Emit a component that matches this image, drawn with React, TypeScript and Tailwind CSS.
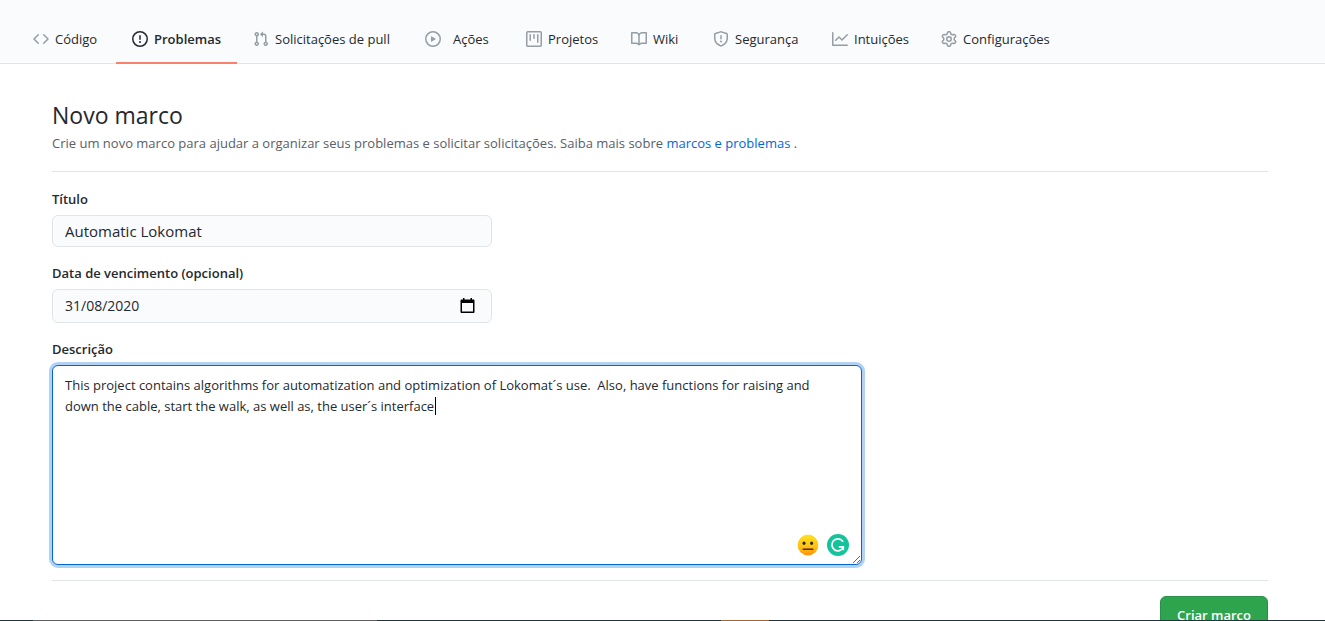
const ICONS = {
  code: 'M4.72 3.22a.75.75 0 011.06 1.06L2.06 8l3.72 3.72a.75.75 0 11-1.06 1.06L.47 8.53a.75.75 0 010-1.06l4.25-4.25zm6.56 0a.75.75 0 10-1.06 1.06L13.94 8l-3.72 3.72a.75.75 0 101.06 1.06l4.25-4.25a.75.75 0 000-1.06l-4.25-4.25z',
  issue: 'M8 1.5a6.5 6.5 0 100 13 6.5 6.5 0 000-13zM0 8a8 8 0 1116 0A8 8 0 010 8zm9 3a1 1 0 11-2 0 1 1 0 012 0zm-.25-6.25a.75.75 0 00-1.5 0v3.5a.75.75 0 001.5 0v-3.5z',
  pull: 'M7.177 3.073L9.573.677A.25.25 0 0110 .854v4.792a.25.25 0 01-.427.177L7.177 3.427a.25.25 0 010-.354zM3.75 2.5a.75.75 0 100 1.5.75.75 0 000-1.5zm-2.25.75a2.25 2.25 0 113 2.122v5.256a2.251 2.251 0 11-1.5 0V5.372A2.25 2.25 0 011.5 3.25zM11 2.5h-1V4h1a1 1 0 011 1v5.628a2.251 2.251 0 101.5 0V5A2.5 2.5 0 0011 2.5zm1 10.25a.75.75 0 111.5 0 .75.75 0 01-1.5 0zM3.75 12a.75.75 0 100 1.5.75.75 0 000-1.5z',
  play: 'M1.5 8a6.5 6.5 0 1113 0 6.5 6.5 0 01-13 0zM8 0a8 8 0 100 16A8 8 0 008 0zM6.379 5.227A.25.25 0 006 5.442v5.117a.25.25 0 00.379.214l4.264-2.559a.25.25 0 000-.428L6.379 5.227z',
  project:
    'M1.75 0A1.75 1.75 0 000 1.75v12.5C0 15.216.784 16 1.75 16h12.5A1.75 1.75 0 0016 14.25V1.75A1.75 1.75 0 0014.25 0H1.75zM1.5 1.75a.25.25 0 01.25-.25h12.5a.25.25 0 01.25.25v12.5a.25.25 0 01-.25.25H1.75a.25.25 0 01-.25-.25V1.75zM11.75 3a.75.75 0 00-.75.75v7.5a.75.75 0 001.5 0v-7.5a.75.75 0 00-.75-.75zm-8.25.75a.75.75 0 011.5 0v5.5a.75.75 0 01-1.5 0v-5.5zM8 3a.75.75 0 00-.75.75v3.5a.75.75 0 001.5 0v-3.5A.75.75 0 008 3z',
  book: 'M0 1.75A.75.75 0 01.75 1h4.253c1.227 0 2.317.59 3 1.501A3.744 3.744 0 0111.006 1h4.245a.75.75 0 01.75.75v10.5a.75.75 0 01-.75.75h-4.507a2.25 2.25 0 00-1.591.659l-.622.621a.75.75 0 01-1.06 0l-.622-.621A2.25 2.25 0 005.258 13H.75a.75.75 0 01-.75-.75V1.75zm8.755 3a2.25 2.25 0 012.25-2.25H14.5v9h-3.757c-.71 0-1.4.201-1.992.572l.004-7.322zm-1.504 7.324l.004-5.073-.002-2.253A2.25 2.25 0 005.003 2.5H1.5v9h3.757a3.75 3.75 0 011.994.574z',
  shield:
    'M7.467.133a1.75 1.75 0 011.066 0l5.25 1.68A1.75 1.75 0 0115 3.48V7c0 1.566-.32 3.182-1.303 4.682-.983 1.498-2.585 2.813-5.032 3.855a1.7 1.7 0 01-1.33 0c-2.447-1.042-4.049-2.357-5.032-3.855C1.32 10.182 1 8.566 1 7V3.48a1.75 1.75 0 011.217-1.667l5.25-1.68zm.61 1.429a.25.25 0 00-.153 0l-5.25 1.68a.25.25 0 00-.174.238V7c0 1.358.275 2.666 1.057 3.86.784 1.194 2.121 2.34 4.366 3.297a.2.2 0 00.154 0c2.245-.956 3.582-2.104 4.366-3.298C13.225 9.666 13.5 8.36 13.5 7V3.48a.25.25 0 00-.174-.237l-5.25-1.68zM9 10.5a1 1 0 11-2 0 1 1 0 012 0zm-.25-5.75a.75.75 0 10-1.5 0v3a.75.75 0 001.5 0v-3z',
  graph:
    'M1.5 1.75a.75.75 0 00-1.5 0v12.5c0 .414.336.75.75.75h14.5a.75.75 0 000-1.5H1.5V1.75zm14.28 2.53a.75.75 0 00-1.06-1.06L10 7.94 7.53 5.47a.75.75 0 00-1.06 0L3.22 8.72a.75.75 0 001.06 1.06L7 7.06l2.47 2.47a.75.75 0 001.06 0l5.25-5.25z',
  gear: 'M7.429 1.525a6.593 6.593 0 011.142 0c.036.003.108.036.137.146l.289 1.105c.147.56.55.967.997 1.189.174.086.341.183.501.29.417.278.97.423 1.53.27l1.102-.303c.11-.03.175.016.195.046.219.31.41.641.573.989.014.031.022.11-.059.19l-.815.806c-.411.406-.562.957-.53 1.456a4.588 4.588 0 010 .582c-.032.499.119 1.05.53 1.456l.815.806c.08.08.073.159.059.19a6.494 6.494 0 01-.573.99c-.02.029-.086.074-.195.045l-1.103-.303c-.559-.153-1.112-.008-1.529.27-.16.107-.327.204-.5.29-.449.222-.851.628-.998 1.189l-.289 1.105c-.029.11-.101.143-.137.146a6.613 6.613 0 01-1.142 0c-.036-.003-.108-.037-.137-.146l-.289-1.105c-.147-.56-.55-.967-.997-1.189a4.502 4.502 0 01-.501-.29c-.417-.278-.97-.423-1.53-.27l-1.102.303c-.11.03-.175-.016-.195-.046a6.492 6.492 0 01-.573-.989c-.014-.031-.022-.11.059-.19l.815-.806c.411-.406.562-.957.53-1.456a4.587 4.587 0 010-.582c.032-.499-.119-1.05-.53-1.456l-.815-.806c-.08-.08-.073-.159-.059-.19a6.44 6.44 0 01.573-.99c.02-.029.086-.075.195-.045l1.103.303c.559.153 1.112.008 1.529-.27.16-.107.327-.204.5-.29.449-.222.851-.628.998-1.189l.289-1.105c.029-.11.101-.143.137-.146zM8 0c-.236 0-.47.01-.701.03-.743.065-1.29.615-1.458 1.261l-.29 1.106c-.017.066-.078.158-.211.224a5.994 5.994 0 00-.668.386c-.123.082-.233.09-.3.071L3.27 2.776c-.644-.177-1.392.02-1.82.63a7.977 7.977 0 00-.704 1.217c-.315.675-.111 1.422.363 1.891l.815.806c.05.048.098.147.088.294a6.084 6.084 0 000 .772c.01.147-.038.246-.088.294l-.815.806c-.474.469-.678 1.216-.363 1.891.2.428.436.835.704 1.218.428.609 1.176.806 1.82.63l1.103-.303c.066-.019.176-.011.299.071.213.143.436.272.668.386.133.066.194.158.212.224l.289 1.106c.169.646.715 1.196 1.458 1.26a8.094 8.094 0 001.402 0c.743-.064 1.29-.614 1.458-1.26l.29-1.106c.017-.066.078-.158.211-.224a5.98 5.98 0 00.668-.386c.123-.082.233-.09.3-.071l1.102.302c.644.177 1.392-.02 1.82-.63.268-.382.505-.789.704-1.217.315-.675.111-1.422-.364-1.891l-.814-.806c-.05-.048-.098-.147-.088-.294a6.1 6.1 0 000-.772c-.01-.147.039-.246.088-.294l.814-.806c.475-.469.679-1.216.364-1.891a7.992 7.992 0 00-.704-1.218c-.428-.609-1.176-.806-1.82-.63l-1.103.303c-.066.019-.176.011-.299-.071a5.991 5.991 0 00-.668-.386c-.133-.066-.194-.158-.212-.224L10.16 1.29C9.99.645 9.444.095 8.701.031A8.094 8.094 0 008 0zm1.5 8a1.5 1.5 0 11-3 0 1.5 1.5 0 013 0zM11 8a3 3 0 11-6 0 3 3 0 016 0z',
};

type Tab = { label: string; icon: keyof typeof ICONS; width: string; gap: string; active?: boolean };

const TABS: Tab[] = [
  { label: 'Código', icon: 'code', width: 'w-[99px]', gap: 'gap-1.5' },
  { label: 'Problemas', icon: 'issue', width: 'w-[121px]', gap: 'gap-1.5', active: true },
  { label: 'Solicitações de pull', icon: 'pull', width: 'w-[172px]', gap: 'gap-1.5' },
  { label: 'Ações', icon: 'play', width: 'w-[101px]', gap: 'gap-3' },
  { label: 'Projetos', icon: 'project', width: 'w-[105px]', gap: 'gap-1.5' },
  { label: 'Wiki', icon: 'book', width: 'w-[82px]', gap: 'gap-1.5' },
  { label: 'Segurança', icon: 'shield', width: 'w-[119px]', gap: 'gap-1.5' },
  { label: 'Intuições', icon: 'graph', width: 'w-[109px]', gap: 'gap-1.5' },
  { label: 'Configurações', icon: 'gear', width: 'w-[143px]', gap: 'gap-1.5' },
];

const DESCRIPTION =
  'This project contains algorithms for automatization and optimization of Lokomat´s use.  Also, have functions for raising and down the cable, start the walk, as well as, the user´s interface';

function NavTab({ tab }: { tab: Tab }) {
  const state = tab.active ? 'border-[#f9826c] font-semibold' : 'border-transparent';
  return (
    <li className={`flex shrink-0 ${tab.width}`}>
      <a
        href="#"
        aria-current={tab.active ? 'page' : undefined}
        className={`flex w-full items-center whitespace-nowrap border-b-2 px-4 pt-[15px] pb-[13px] leading-5 ${tab.gap} ${state}`}
      >
        <svg
          viewBox="0 0 16 16"
          aria-hidden="true"
          className={`size-4 shrink-0 ${tab.active ? 'fill-[#24292e]' : 'fill-[#959da5]'}`}
        >
          <path fillRule="evenodd" d={ICONS[tab.icon]} />
        </svg>
        {tab.label}
      </a>
    </li>
  );
}

function CalendarIcon() {
  return (
    <svg viewBox="0 0 15 16" aria-hidden="true" className="h-4 w-[15px]">
      <path fillRule="evenodd" d="M3 0h1.5v1.5h6V0H12v1.5h1.5q1 0 1 1V14q0 1-1 1h-12q-1 0-1-1V2.500q0-1 1-1H3zM2 5v8.500h11V5z" />
    </svg>
  );
}

function NeutralFace() {
  return (
    <svg viewBox="0 0 22 22" aria-hidden="true" className="size-[22px]">
      <defs>
        <linearGradient id="face" x1="0" y1="0" x2="0" y2="1">
          <stop offset="0" stopColor="#ffe11f" />
          <stop offset=".55" stopColor="#ffc516" />
          <stop offset="1" stopColor="#ff9208" />
        </linearGradient>
      </defs>
      <circle cx="11" cy="11" r="10.400" fill="url(#face)" />
      <ellipse cx="7" cy="9.300" rx="1.500" ry="1.800" fill="#2b2524" />
      <ellipse cx="14.600" cy="9.300" rx="1.500" ry="1.800" fill="#2b2524" />
      <path d="M6.200 15.200h9.600" stroke="#4d2f1d" strokeWidth="1.400" strokeLinecap="round" />
    </svg>
  );
}

function GrammarBadge() {
  return (
    <svg viewBox="0 0 22 22" aria-hidden="true" className="size-[22px]">
      <circle cx="11" cy="11" r="11" fill="#15c39a" />
      <path d="M15.700 7.200A6 6 0 1 0 16.300 13.500" fill="none" stroke="#fff" strokeWidth="1.700" strokeLinecap="round" />
      <path d="M11.800 12.800H16.300V16.200" fill="none" stroke="#fff" strokeWidth="1.700" />
    </svg>
  );
}

export default function App() {
  return (
    <div className="h-screen overflow-hidden bg-white font-['Open_Sans','Noto_Sans',sans-serif] text-[13px] leading-[21px] text-[#24292e]">
      <nav aria-label="Repositório" className="border-b border-[#e1e4e8] bg-[#fafbfc] pl-[17px] pr-4 pt-3.5">
        <ul className="-mb-px flex">
          {TABS.map((tab) => (
            <NavTab key={tab.label} tab={tab} />
          ))}
        </ul>
      </nav>

      <main className="ml-[52px] mr-[57px] pt-[33px]">
        <header className="border-b border-[#e1e4e8] pb-[17px]">
          <h1 className="text-[23px] leading-9">Novo marco</h1>
          <p className="text-[#586069]">
            Crie um novo marco para ajudar a organizar seus problemas e solicitar solicitações. Saiba mais sobre{' '}
            <a href="#" className="text-[#0366d6]">
              marcos e problemas
            </a>{' '}
            .
          </p>
        </header>

        <form className="pt-[17px]">
          <div className="flex max-w-[440px] flex-col gap-[5px]">
            <label htmlFor="title" className="font-semibold">
              Título
            </label>
            <input
              id="title"
              type="text"
              defaultValue="Automatic Lokomat"
              className="h-8 rounded-md border border-[#e1e4e8] bg-[#fafbfc] px-3 text-[15px] outline-none"
            />
          </div>

          <div className="mt-4 flex max-w-[440px] flex-col gap-[5px]">
            <label htmlFor="due" className="font-semibold">
              Data de vencimento (opcional)
            </label>
            <div className="flex h-[34px] items-center rounded-md border border-[#e1e4e8] bg-[#fafbfc] pl-3 pr-4">
              <input
                id="due"
                type="text"
                defaultValue="31/08/2020"
                className="min-w-0 flex-1 bg-transparent text-sm outline-none"
              />
              <button type="button" aria-label="Abrir calendário">
                <CalendarIcon />
              </button>
            </div>
          </div>

          <div className="mt-4 flex max-w-[810px] flex-col gap-[5px]">
            <label htmlFor="description" className="font-semibold">
              Descrição
            </label>
            <div className="relative flex">
              <textarea
                id="description"
                defaultValue={DESCRIPTION}
                className="h-[200px] w-full resize rounded-md border border-[#0366d6] bg-white py-[9px] pl-3 pr-8 shadow-[0_0_0_3px_rgba(3,102,214,0.3)] outline-none"
              />
              <span className="pointer-events-none absolute top-8 left-[383px] h-[18px] w-px bg-black" />
              <div className="pointer-events-none absolute right-[13px] bottom-[9px] flex gap-2">
                <NeutralFace />
                <GrammarBadge />
              </div>
            </div>
          </div>

          <div className="mt-[15px] flex justify-end border-t border-[#e1e4e8] pt-[15px]">
            <button
              type="submit"
              className="rounded-md border border-[#2a8f47] bg-[#2ea44f] px-4 py-2 font-semibold text-white"
            >
              Criar marco
            </button>
          </div>
        </form>
      </main>

      <div className="fixed inset-x-0 bottom-0 flex h-px bg-[#20343e]">
        <span className="ml-[33px] w-[344px] bg-[#5e5e5e]" />
        <span className="ml-[344px] w-12 bg-[#a9642a]" />
      </div>
    </div>
  );
}
